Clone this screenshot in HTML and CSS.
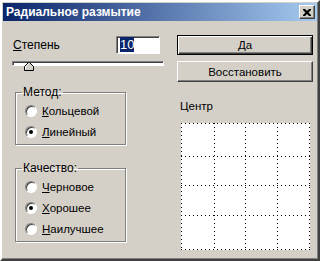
FILE: index.html
```html
<!DOCTYPE html>
<html lang="ru">
<head>
  <meta charset="UTF-8" />
  <title>Радиальное размытие</title>
  <link rel="stylesheet" href="styles.css">
</head>
<body>

  <div class="window">
    <div class="titlebar">
      <span class="title">Радиальное размытие</span>
      <button class="close" type="button">
        <svg width="8" height="7" viewBox="0 0 8 7"><path d="M0 0h2l2 2 2-2h2v1l-2.5 2.5 2.5 2.5v1h-2l-2-2-2 2h-2v-1l2.5-2.5-2.5-2.5z" fill="#000"/></svg>
      </button>
    </div>

    <div class="content">
      <div class="left">
        <div class="amount">
          <label><u>С</u>тепень</label>
          <div class="field"><span class="sel">10</span></div>
        </div>
        <div class="slider">
          <svg class="thumb" width="10" height="9" viewBox="0 0 10 9">
            <path d="M0.5 8.5V4.5L4.5 0.5h1L9.5 4.5v4z" fill="#d4d0c8" stroke="#000"/>
            <path d="M1.5 7.5V4.9L4.9 1.5" fill="none" stroke="#fff"/>
          </svg>
        </div>

        <fieldset class="group">
          <legend>Метод:</legend>
          <div class="radio"><span class="dot"></span><u>К</u>ольцевой</div>
          <div class="radio"><span class="dot on"></span><u>Л</u>инейный</div>
        </fieldset>

        <fieldset class="group quality">
          <legend>Качество:</legend>
          <div class="radio"><span class="dot"></span><u>Ч</u>ерновое</div>
          <div class="radio"><span class="dot on"></span><u>Х</u>орошее</div>
          <div class="radio"><span class="dot"></span><u>Н</u>аилучшее</div>
        </fieldset>
      </div>

      <div class="right">
        <button class="btn default" type="button">Да</button>
        <button class="btn" type="button">Восстановить</button>
        <div class="center-label">Центр</div>
        <div class="center-box">
          <svg width="129" height="127" viewBox="0 0 129 127">
            <g stroke="#000" stroke-width="1" stroke-dasharray="1 3" fill="none">
              <path d="M0 0.5H129M0 33.5H129M0 62.5H129M0 92.5H129M0 126.5H129"/>
              <path d="M0.5 0V127M33.5 0V127M64.5 0V127M96.5 0V127M128.5 0V127"/>
            </g>
          </svg>
        </div>
      </div>
    </div>
  </div>

</body>
</html>
```

FILE: styles.css
```css
body {
  margin: 0;
  background-color: #d4d0c8;
  font-family: 'Liberation Sans', Arial, sans-serif;
  font-size: 11px;
  color: #000;
}

.window {
  width: 320px;
  height: 261px;
  box-sizing: border-box;
  background-color: #d4d0c8;
  border-top: 2px solid #fff;
  border-left: 2px solid #fff;
  border-right: 2px solid #404040;
  border-bottom: 2px solid #404040;
  padding: 1px;
  box-shadow: inset -1px -1px 0 #808080;
}

.titlebar {
  height: 18px;
  display: flex;
  align-items: center;
  justify-content: space-between;
  background: linear-gradient(to right, #0a246a, #a6caf0);
  padding: 0 2px 0 3px;
}

.title {
  color: #fff;
  font-weight: bold;
  font-size: 12px;
}

.close {
  width: 16px;
  height: 14px;
  padding: 0;
  display: flex;
  align-items: center;
  justify-content: center;
  background-color: #d4d0c8;
  border: 1px solid;
  border-color: #fff #404040 #404040 #fff;
  box-shadow: inset -1px -1px 0 #808080;
}

.content {
  display: flex;
  padding: 15px 0 0 9px;
}

.left {
  width: 152px;
}

.amount {
  display: flex;
  align-items: center;
  justify-content: space-between;
  height: 18px;
  padding: 0 4px 0 1px;
  font-size: 12px;
}

.field {
  width: 44px;
  height: 18px;
  box-sizing: border-box;
  background-color: #fff;
  border: 1px solid;
  border-color: #808080 #fff #fff #808080;
  box-shadow: inset 1px 1px 0 #404040;
  padding: 1px 0 0 3px;
  font-size: 13px;
  line-height: 14px;
}

.sel {
  background-color: #0a246a;
  color: #fff;
}

.slider {
  position: relative;
  height: 5px;
  margin-top: 7px;
  box-sizing: border-box;
  background-color: #fff;
  border: 1px solid;
  border-color: #808080 #fff #fff #808080;
  box-shadow: inset 1px 1px 0 #404040;
}

.thumb {
  position: absolute;
  left: 11px;
  top: 0;
}

.group {
  margin: 20px 0 0 3px;
  width: 111px;
  box-sizing: border-box;
  border: 1px solid #808080;
  box-shadow: 1px 1px 0 #fff, inset 1px 1px 0 #fff;
  padding: 2px 0 2px 9px;
}

.group legend {
  padding: 0 1px;
  margin-left: -3px;
  line-height: 12px;
  font-size: 12px;
}

.quality {
  margin-top: 17px;
}

.radio {
  display: flex;
  align-items: center;
  height: 21px;
  font-size: 11.5px;
}

.dot {
  width: 12px;
  height: 12px;
  box-sizing: border-box;
  border-radius: 50%;
  border: 1px solid;
  border-color: #808080 #fff #fff #808080;
  background-color: #fff;
  box-shadow: inset 1px 1px 0 #404040;
  margin-right: 5px;
  display: flex;
  align-items: center;
  justify-content: center;
}

.dot.on::after {
  content: '';
  width: 4px;
  height: 4px;
  border-radius: 50%;
  background-color: #000;
}

.right {
  width: 136px;
  margin: -1px 0 0 13px;
  display: flex;
  flex-direction: column;
}

.btn {
  height: 21px;
  padding: 0;
  font-family: inherit;
  font-size: 11.5px;
  color: #000;
  background-color: #d4d0c8;
  border: 1px solid;
  border-color: #fff #404040 #404040 #fff;
  box-shadow: inset -1px -1px 0 #808080;
}

.btn.default {
  height: 20px;
  border: 1px solid #000;
  box-shadow: inset 1px 1px 0 #fff, inset -1px -1px 0 #404040, inset -2px -2px 0 #808080;
  margin-bottom: 6px;
}

.center-label {
  margin: 17px 0 0 3px;
  font-size: 11.5px;
  line-height: 14px;
}

.center-box {
  margin: 10px 0 0 4px;
  width: 129px;
  height: 127px;
  background-color: #fff;
}

.center-box svg {
  display: block;
}
```
